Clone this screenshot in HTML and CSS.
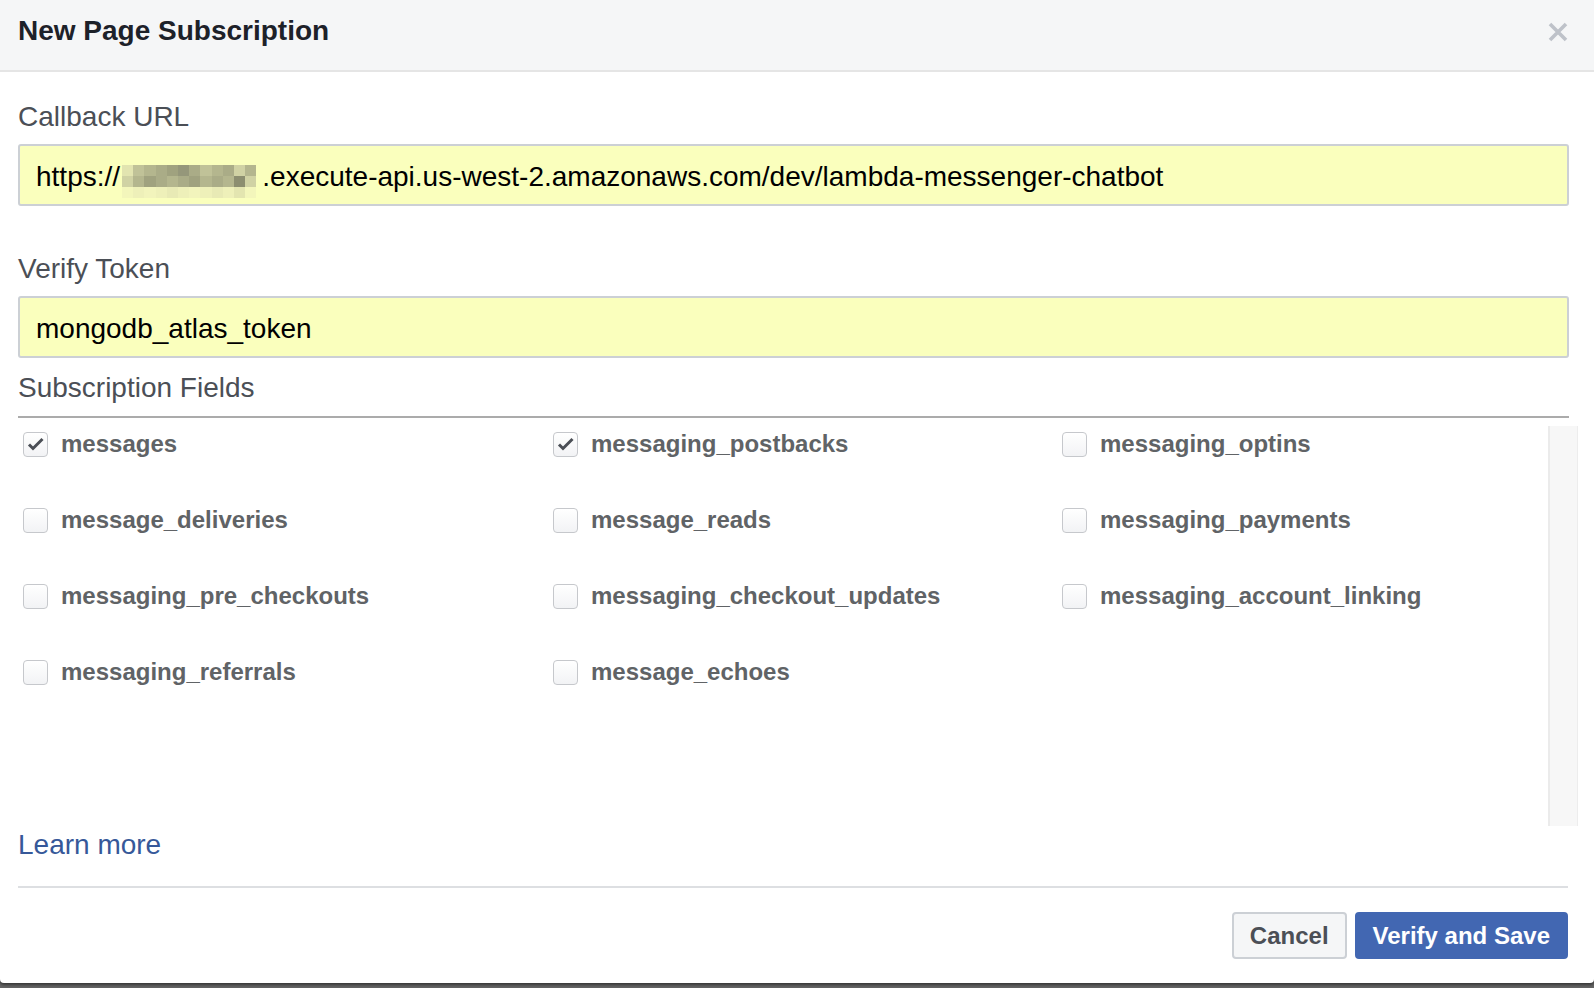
FILE: index.html
```html
<!DOCTYPE html>
<html lang="en">
<head>
    <meta charset="UTF-8">
    <meta name="viewport" content="width=device-width, initial-scale=1.0">
    <title>New Page Subscription</title>
    <link rel="stylesheet" href="styles.css">
</head>
<body>
    <div class="dialog">
        <div class="dialog-header">
            <h2 class="dialog-title">New Page Subscription</h2>
            <button class="close-btn" aria-label="Close">
                <svg width="20" height="20" viewBox="0 0 20 20"><path d="M2 2 L18 18 M18 2 L2 18" stroke="#bec2c9" stroke-width="3.6" fill="none"/></svg>
            </button>
        </div>

        <div class="dialog-body">
            <label class="field-label">Callback URL</label>
            <div class="field-input">https://<span class="mosaic"><span class="mosaic-grid">
                <i class="m1"></i><i class="m3"></i><i class="m4"></i><i class="m5"></i><i class="m6"></i><i class="m7"></i><i class="m5"></i><i class="m3"></i><i class="m4"></i><i class="m5"></i><i class="m2"></i><i class="m4"></i>
                <i class="m2"></i><i class="m4"></i><i class="m6"></i><i class="m5"></i><i class="m4"></i><i class="m5"></i><i class="m6"></i><i class="m4"></i><i class="m5"></i><i class="m4"></i><i class="m8"></i><i class="m2"></i>
                <i class="m0"></i><i class="l1"></i><i class="l2"></i><i class="l1"></i><i class="l3"></i><i class="l1"></i><i class="l2"></i><i class="l1"></i><i class="l3"></i><i class="l1"></i><i class="l4"></i><i class="m0"></i>
            </span></span>.execute-api.us-west-2.amazonaws.com/dev/lambda-messenger-chatbot</div>

            <label class="field-label spaced">Verify Token</label>
            <div class="field-input">mongodb_atlas_token</div>

            <div class="section-label">Subscription Fields</div>
            <div class="fields-wrap">
                <div class="fields-grid">
                    <label class="field-item"><span class="check checked"><svg width="25" height="25" viewBox="0 0 25 25"><path d="M6 12.5 L10 16.5 L19.5 7" stroke="#4b4f56" stroke-width="3" fill="none"/></svg></span>messages</label>
                    <label class="field-item"><span class="check checked"><svg width="25" height="25" viewBox="0 0 25 25"><path d="M6 12.5 L10 16.5 L19.5 7" stroke="#4b4f56" stroke-width="3" fill="none"/></svg></span>messaging_postbacks</label>
                    <label class="field-item"><span class="check"></span>messaging_optins</label>
                    <label class="field-item"><span class="check"></span>message_deliveries</label>
                    <label class="field-item"><span class="check"></span>message_reads</label>
                    <label class="field-item"><span class="check"></span>messaging_payments</label>
                    <label class="field-item"><span class="check"></span>messaging_pre_checkouts</label>
                    <label class="field-item"><span class="check"></span>messaging_checkout_updates</label>
                    <label class="field-item"><span class="check"></span>messaging_account_linking</label>
                    <label class="field-item"><span class="check"></span>messaging_referrals</label>
                    <label class="field-item"><span class="check"></span>message_echoes</label>
                </div>
                <div class="scroll-track"></div>
            </div>

            <a href="#learn-more" class="learn-more">Learn more</a>
        </div>

        <div class="dialog-footer">
            <button class="btn btn-cancel">Cancel</button>
            <button class="btn btn-primary">Verify and Save</button>
        </div>
    </div>
</body>
</html>
```

FILE: styles.css
```css
* { margin: 0; padding: 0; box-sizing: border-box; }
html, body { height: 100%; }
body { background: #646464; font-family: "Liberation Sans", Arial, sans-serif; overflow: hidden; }

.dialog { background: #fff; height: 983px; border-radius: 0 0 4px 4px; box-shadow: 0 2px 3px rgba(0,0,0,0.45); display: flex; flex-direction: column; }

.dialog-header { height: 72px; background: #f5f6f7; border-bottom: 2px solid #e5e5e5; padding: 15px 26px 0 18px; display: flex; justify-content: space-between; align-items: flex-start; }
.dialog-title { font-size: 28px; line-height: 32px; font-weight: bold; color: #1d2129; }
.close-btn { border: 0; background: transparent; width: 20px; height: 20px; margin-top: 7px; display: block; cursor: pointer; }
.close-btn svg { display: block; }

.dialog-body { padding: 0 25px 0 18px; }
.field-label { display: block; font-size: 28px; line-height: 32px; color: #4b4f56; margin-top: 29px; margin-bottom: 11px; }
.field-label.spaced { margin-top: 47px; }
.field-input { height: 62px; background: #faffbd; border: 2px solid #ccd0d5; border-radius: 3px; padding: 15px 16px 11px; font-size: 28px; line-height: 32px; color: #000; white-space: nowrap; overflow: hidden; }

.mosaic { display: inline-block; vertical-align: top; margin: 4px 6px 0 2px; }
.mosaic-grid { display: grid; grid-template-columns: repeat(12, 11.2px); grid-template-rows: repeat(3, 11px); }
.mosaic-grid i { display: block; }
.m0 { background: #f3f6bb; }
.m1 { background: #e2e4b0; }
.m2 { background: #d0d2a4; }
.m3 { background: #c0c298; }
.m4 { background: #b4b68e; }
.m5 { background: #aaac87; }
.m6 { background: #a0a27f; }
.m7 { background: #95977a; }
.m8 { background: #8c8e70; }
.l1 { background: #eef0b9; }
.l2 { background: #f2f4bc; }
.l3 { background: #e8eab5; }
.l4 { background: #e3e5b0; }

.section-label { font-size: 28px; line-height: 32px; color: #4b4f56; margin-top: 14px; padding-bottom: 12px; border-bottom: 2px solid #ababab; }

.fields-wrap { display: flex; height: 408px; margin-right: -9px; }
.fields-grid { flex: 1; display: grid; grid-template-columns: 530px 509px 1fr; grid-auto-rows: 28px; row-gap: 48px; padding: 12px 0 0 5px; align-content: start; }
.field-item { display: flex; align-items: center; gap: 13px; font-size: 24px; line-height: 28px; font-weight: bold; color: #606366; white-space: nowrap; }
.check { width: 25px; height: 25px; flex: none; border: 1px solid #c6c8cc; border-radius: 4px; background: linear-gradient(#ffffff, #f2f3f5); box-shadow: inset 0 1px 0 #fff; display: flex; align-items: center; justify-content: center; }
.check svg { display: block; margin: -1px; }

.scroll-track { width: 30px; margin-top: 8px; height: 400px; background: #f7f7f7; border-left: 2px solid #ebebeb; border-right: 1px solid #ededed; }

.learn-more { display: block; margin-top: 3px; font-size: 28px; line-height: 32px; color: #365899; text-decoration: none; width: max-content; }

.dialog-footer { margin: 25px 26px 0 18px; border-top: 2px solid #dddfe2; padding: 24px 0 24px; display: flex; justify-content: flex-end; gap: 8px; }
.btn { height: 47px; padding: 0 16px; border-radius: 4px; font-family: "Liberation Sans", Arial, sans-serif; font-size: 24px; font-weight: bold; cursor: pointer; }
.btn-cancel { background: #f5f6f7; border: 2px solid #ccd0d5; color: #4b4f56; }
.btn-primary { background: #4267b2; border: 2px solid #4267b2; color: #fff; }
```
